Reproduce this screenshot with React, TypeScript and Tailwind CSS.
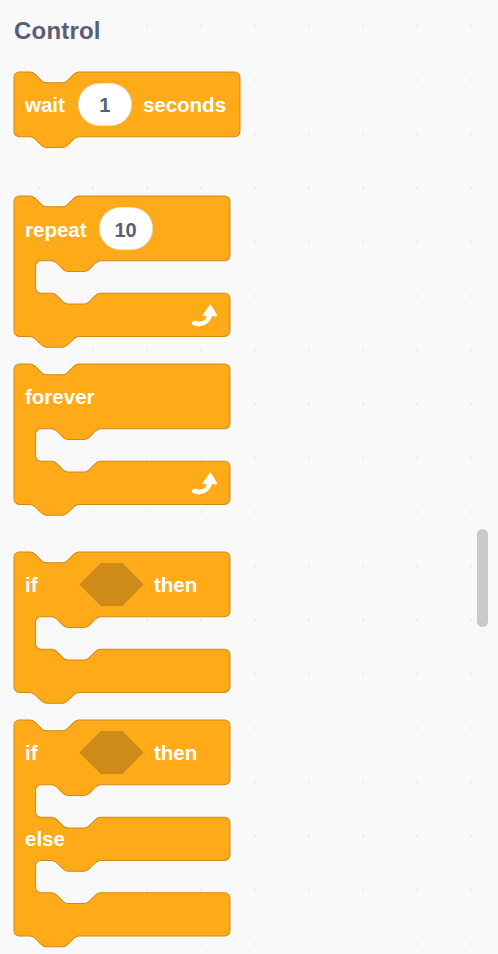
import type { ReactNode } from "react";

const S = 1.35;
const FILL = "#ffab19";
const EDGE = "#cf8b17";

const notchLR = "c 2,0 3,1 4,2 l 4,4 c 1,1 2,2 4,2 h 12 c 2,0 3,-1 4,-2 l 4,-4 c 1,-1 2,-2 4,-2";
const notchRL = "c -2,0 -3,1 -4,2 l -4,4 c -1,1 -2,2 -4,2 h -12 c -2,0 -3,-1 -4,-2 l -4,-4 c -1,-1 -2,-2 -4,-2";
const GAP = 24;

// arms are heights in block units; a 24u statement gap sits between each pair
function blockPath(w: number, arms: number[]) {
  let d = `M 0,4 A 4,4 0 0,1 4,0 H 12 ${notchLR} H ${w - 4} A 4,4 0 0,1 ${w},4`;
  let y = 0;
  arms.forEach((h, i) => {
    y += h;
    d += ` V ${y - 4} A 4,4 0 0,1 ${w - 4},${y}`;
    if (i < arms.length - 1) {
      d += ` H 64 ${notchRL} H 20 A 4,4 0 0,0 16,${y + 4}`;
      y += GAP;
      d += ` V ${y - 4} A 4,4 0 0,0 20,${y} H 28 ${notchLR} H ${w - 4} A 4,4 0 0,1 ${w},${y + 4}`;
    }
  });
  d += ` H 48 ${notchRL} H 4 A 4,4 0 0,1 0,${y - 4} Z`;
  return { d, h: y };
}

function Block({ width, arms, rows }: { width: number; arms: number[]; rows: ReactNode[] }) {
  const w = width / S;
  const { d, h } = blockPath(w, arms);
  return (
    <div className="relative" style={{ width: w * S, height: h * S }}>
      <svg
        className="absolute left-0 top-0 overflow-visible"
        width={w * S}
        height={(h + 8) * S}
        viewBox={`0 0 ${w} ${h + 8}`}
      >
        <path d={d} fill={FILL} stroke={EDGE} strokeWidth={0.75} />
      </svg>
      <div className="relative flex flex-col">
        {rows.map((row, i) => (
          <div key={i} className="flex flex-col">
            <div className="flex items-center px-[11px] pt-[2px]" style={{ height: arms[i] * S }}>
              {row}
            </div>
            {i < rows.length - 1 ? <div style={{ height: GAP * S }} /> : null}
          </div>
        ))}
      </div>
    </div>
  );
}

function Label({ children, className = "" }: { children: ReactNode; className?: string }) {
  return <span className={`text-[20.5px] leading-none font-bold text-white ${className}`}>{children}</span>;
}

function NumberField({ value }: { value: string }) {
  return (
    <span className="-mt-[2px] flex h-[43px] w-[54px] items-center justify-center rounded-full border border-black/10 bg-white pt-[2px] text-[20px] leading-none font-bold text-[#575e75]">
      {value}
    </span>
  );
}

function BoolSlot() {
  return (
    <svg className="-mt-[2px]" width="65" height="43" viewBox="0 0 48 32">
      <polygon points="0,16 16,0 32,0 48,16 32,32 16,32" fill={EDGE} />
    </svg>
  );
}

function RepeatArrow() {
  return (
    <svg width="25" height="24" viewBox="0 0 25 24" className="-mt-[2px]">
      <path d="M2.2 20 C 9 22.5, 16.5 19.5, 17.8 11.5" fill="none" stroke="white" strokeWidth="4.6" strokeLinecap="round" />
      <path d="M11.5 12.5 L18.3 2.5 L24.5 12.5 Z" fill="white" stroke="white" strokeWidth="1.6" strokeLinejoin="round" />
    </svg>
  );
}

const arrowRow = (
  <div className="flex w-full justify-end pr-[2px]">
    <RepeatArrow />
  </div>
);

const ifRow = (
  <>
    <Label className="w-[54px]">if</Label>
    <BoolSlot />
    <Label className="ml-[10px]">then</Label>
  </>
);

export default function App() {
  return (
    <div className="relative h-[954px] w-[498px] overflow-hidden bg-[#f9f9f9] bg-[radial-gradient(circle,#ebebeb_1px,transparent_1.5px)] bg-[length:54px_54px] bg-[position:12px_-1px] font-['Liberation_Sans',Arial,sans-serif]">
      <div className="flex flex-col items-start pl-[14px] pt-[18.6px]">
        <h2 className="text-[24px] leading-[24px] font-bold tracking-[0.2px] text-[#575e75]">Control</h2>

        <div className="mt-[29.4px]">
          <Block
            width={226}
            arms={[48]}
            rows={[
              <>
                <Label>wait</Label>
                <span className="ml-[13px]">
                  <NumberField value="1" />
                </span>
                <Label className="ml-[11px]">seconds</Label>
              </>,
            ]}
          />
        </div>

        <div className="mt-[59.7px]">
          <Block
            width={216}
            arms={[48, 32]}
            rows={[
              <>
                <Label>repeat</Label>
                <span className="ml-[12px]">
                  <NumberField value="10" />
                </span>
              </>,
              arrowRow,
            ]}
          />
        </div>

        <div className="mt-[27px]">
          <Block width={216} arms={[48, 32]} rows={[<Label>forever</Label>, arrowRow]} />
        </div>

        <div className="mt-[47.6px]">
          <Block width={216} arms={[48, 32]} rows={[ifRow, null]} />
        </div>

        <div className="mt-[27.6px]">
          <Block width={216} arms={[48, 32, 32]} rows={[ifRow, <Label>else</Label>, null]} />
        </div>
      </div>

      <div className="absolute right-[10px] top-[529px] h-[98px] w-[11px] rounded-full bg-[#c9c9c9]" />
    </div>
  );
}
